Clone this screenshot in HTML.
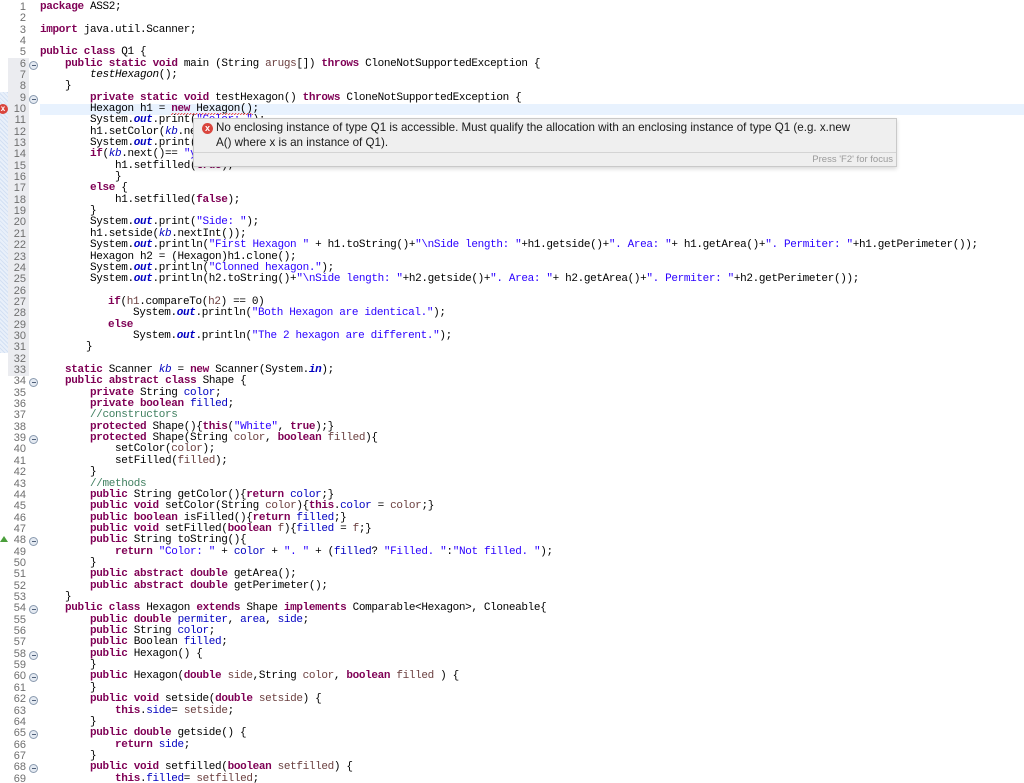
<!DOCTYPE html>
<html><head><meta charset="utf-8">
<style>
html,body{margin:0;padding:0;background:#fff;width:1024px;height:783px;overflow:hidden;position:relative}
.ln{position:absolute;left:0;width:1024px;height:11.35px}
.num{position:absolute;right:998px;top:0;font:11px "Liberation Sans",sans-serif;color:#6f6f6f;line-height:11.35px;text-align:right}
.code{position:absolute;top:0;font-family:"Liberation Mono",monospace;font-size:11px;letter-spacing:-0.35px;line-height:11.35px;white-space:pre;color:#000}
.k{color:#7f0055;font-weight:bold}
.s{color:#2a00ff}
.f{color:#0000c0}
.o{color:#0000c0;font-weight:bold;font-style:italic}
.si{color:#0000c0;font-style:italic}
.c{color:#3f7f5f}
.v{color:#6a3e3e}
.i{font-style:italic}
.fold{position:absolute;left:29px;top:2px;width:7px;height:7px;border:1px solid #8a9aae;border-radius:50%;background:#e4eaf2}
.fold:after{content:"";position:absolute;left:1.5px;top:3px;width:4px;height:1px;background:#50607a}
.sq{background:linear-gradient(135deg,transparent 40%,#e22 40%,#e22 60%,transparent 60%) repeat-x left bottom/3px 2px}
</style></head><body>
<div style="position:absolute;left:8px;top:58px;width:21px;height:317.8px;background:#ebecf0"></div>
<div style="position:absolute;left:0;top:92px;width:8px;height:261px;background:repeating-linear-gradient(45deg,#d3e0f3 0 1px,#e9f0fa 1px 3px)"></div>
<div style="position:absolute;left:40px;top:103.5px;width:984px;height:11.35px;background:#e8f2fe"></div>
<div style="position:absolute;left:-2px;top:104px;width:10px;height:10px;border-radius:50%;background:#d9453d;color:#fff;font:bold 8px 'Liberation Sans',sans-serif;line-height:10px;text-align:center">x</div>
<div style="position:absolute;left:0;top:536px;width:0;height:0;border-left:4px solid transparent;border-right:4px solid transparent;border-bottom:6px solid #4a9e3a"></div>

<div id="lines"></div>
<script>
var L=[
[40,'<span class="k">package</span> ASS2;'],
[40,''],
[40,'<span class="k">import</span> java.util.Scanner;'],
[40,''],
[40,'<span class="k">public</span> <span class="k">class</span> Q1 {'],
[65,'<span class="k">public</span> <span class="k">static</span> <span class="k">void</span> main (String <span class="v">arugs</span>[]) <span class="k">throws</span> CloneNotSupportedException {',1],
[90,'<span class="i">testHexagon</span>();'],
[65,'}'],
[90,'<span class="k">private</span> <span class="k">static</span> <span class="k">void</span> testHexagon() <span class="k">throws</span> CloneNotSupportedException {',1],
[90,'Hexagon h1 = <span class="sq"><span class="k">new</span> Hexagon()</span>;'],
[90,'System.<span class="o">out</span>.print(<span class="s">"Color: "</span>);'],
[90,'h1.setColor(<span class="si">kb</span>.next());'],
[90,'System.<span class="o">out</span>.print(<span class="s">"Filled? (y/n): "</span>);'],
[90,'<span class="k">if</span>(<span class="si">kb</span>.next()== <span class="s">"y"</span>){'],
[115,'h1.setfilled(<span class="k">true</span>);'],
[115,'}'],
[90,'<span class="k">else</span> {'],
[115,'h1.setfilled(<span class="k">false</span>);'],
[90,'}'],
[90,'System.<span class="o">out</span>.print(<span class="s">"Side: "</span>);'],
[90,'h1.setside(<span class="si">kb</span>.nextInt());'],
[90,'System.<span class="o">out</span>.println(<span class="s">"First Hexagon "</span> + h1.toString()+<span class="s">"\\nSide length: "</span>+h1.getside()+<span class="s">". Area: "</span>+ h1.getArea()+<span class="s">". Permiter: "</span>+h1.getPerimeter());'],
[90,'Hexagon h2 = (Hexagon)h1.clone();'],
[90,'System.<span class="o">out</span>.println(<span class="s">"Clonned hexagon."</span>);'],
[90,'System.<span class="o">out</span>.println(h2.toString()+<span class="s">"\\nSide length: "</span>+h2.getside()+<span class="s">". Area: "</span>+ h2.getArea()+<span class="s">". Permiter: "</span>+h2.getPerimeter());'],
[90,''],
[108,'<span class="k">if</span>(<span class="v">h1</span>.compareTo(<span class="v">h2</span>) == 0)'],
[133,'System.<span class="o">out</span>.println(<span class="s">"Both Hexagon are identical."</span>);'],
[108,'<span class="k">else</span>'],
[133,'System.<span class="o">out</span>.println(<span class="s">"The 2 hexagon are different."</span>);'],
[86,'}'],
[86,''],
[65,'<span class="k">static</span> Scanner <span class="si">kb</span> = <span class="k">new</span> Scanner(System.<span class="o">in</span>);'],
[65,'<span class="k">public</span> <span class="k">abstract</span> <span class="k">class</span> Shape {',1],
[90,'<span class="k">private</span> String <span class="f">color</span>;'],
[90,'<span class="k">private</span> <span class="k">boolean</span> <span class="f">filled</span>;'],
[90,'<span class="c">//constructors</span>'],
[90,'<span class="k">protected</span> Shape(){<span class="k">this</span>(<span class="s">"White"</span>, <span class="k">true</span>);}'],
[90,'<span class="k">protected</span> Shape(String <span class="v">color</span>, <span class="k">boolean</span> <span class="v">filled</span>){',1],
[115,'setColor(<span class="v">color</span>);'],
[115,'setFilled(<span class="v">filled</span>);'],
[90,'}'],
[90,'<span class="c">//methods</span>'],
[90,'<span class="k">public</span> String getColor(){<span class="k">return</span> <span class="f">color</span>;}'],
[90,'<span class="k">public</span> <span class="k">void</span> setColor(String <span class="v">color</span>){<span class="k">this</span>.<span class="f">color</span> = <span class="v">color</span>;}'],
[90,'<span class="k">public</span> <span class="k">boolean</span> isFilled(){<span class="k">return</span> <span class="f">filled</span>;}'],
[90,'<span class="k">public</span> <span class="k">void</span> setFilled(<span class="k">boolean</span> <span class="v">f</span>){<span class="f">filled</span> = <span class="v">f</span>;}'],
[90,'<span class="k">public</span> String toString(){',1],
[115,'<span class="k">return</span> <span class="s">"Color: "</span> + <span class="f">color</span> + <span class="s">". "</span> + (<span class="f">filled</span>? <span class="s">"Filled. "</span>:<span class="s">"Not filled. "</span>);'],
[90,'}'],
[90,'<span class="k">public</span> <span class="k">abstract</span> <span class="k">double</span> getArea();'],
[90,'<span class="k">public</span> <span class="k">abstract</span> <span class="k">double</span> getPerimeter();'],
[65,'}'],
[65,'<span class="k">public</span> <span class="k">class</span> Hexagon <span class="k">extends</span> Shape <span class="k">implements</span> Comparable&lt;Hexagon&gt;, Cloneable{',1],
[90,'<span class="k">public</span> <span class="k">double</span> <span class="f">permiter</span>, <span class="f">area</span>, <span class="f">side</span>;'],
[90,'<span class="k">public</span> String <span class="f">color</span>;'],
[90,'<span class="k">public</span> Boolean <span class="f">filled</span>;'],
[90,'<span class="k">public</span> Hexagon() {',1],
[90,'}'],
[90,'<span class="k">public</span> Hexagon(<span class="k">double</span> <span class="v">side</span>,String <span class="v">color</span>, <span class="k">boolean</span> <span class="v">filled</span> ) {',1],
[90,'}'],
[90,'<span class="k">public</span> <span class="k">void</span> setside(<span class="k">double</span> <span class="v">setside</span>) {',1],
[115,'<span class="k">this</span>.<span class="f">side</span>= <span class="v">setside</span>;'],
[90,'}'],
[90,'<span class="k">public</span> <span class="k">double</span> getside() {',1],
[115,'<span class="k">return</span> <span class="f">side</span>;'],
[90,'}'],
[90,'<span class="k">public</span> <span class="k">void</span> setfilled(<span class="k">boolean</span> <span class="v">setfilled</span>) {',1],
[115,'<span class="k">this</span>.<span class="f">filled</span>= <span class="v">setfilled</span>;']
];
var h='';
for(var n=0;n<L.length;n++){
 var t=(n*11.35+1.8).toFixed(2);
 h+='<div class="ln" style="top:'+t+'px"><div class="num">'+(n+1)+'</div>'+(L[n][2]?'<div class="fold"></div>':'')+'<div class="code" style="left:'+L[n][0]+'px">'+L[n][1]+'</div></div>';
}
document.getElementById('lines').innerHTML=h;
</script>

<div style="position:absolute;left:193px;top:118px;width:702px;height:47px;background:#efefef;border:1px solid #c9c9c9;box-shadow:0 2px 4px rgba(0,0,0,.15);font-family:'Liberation Sans',sans-serif">
 <div style="position:absolute;left:8px;top:4px;width:11px;height:11px;border-radius:50%;background:#d9453d;color:#fff;font:bold 9px 'Liberation Sans',sans-serif;line-height:11px;text-align:center">x</div>
 <div style="position:absolute;left:22px;top:2px;width:680px;font-size:11.6px;line-height:14.5px;color:#1a1a1a">No enclosing instance of type Q1 is accessible. Must qualify the allocation with an enclosing instance of type Q1 (e.g. x.new<br>A() where x is an instance of Q1).</div>
 <div style="position:absolute;left:0;top:33px;width:702px;height:1px;background:#d4d4d4"></div>
 <div style="position:absolute;right:3px;top:35px;font-size:9.5px;color:#9a9a9a">Press 'F2' for focus</div>
</div>
</body></html>
